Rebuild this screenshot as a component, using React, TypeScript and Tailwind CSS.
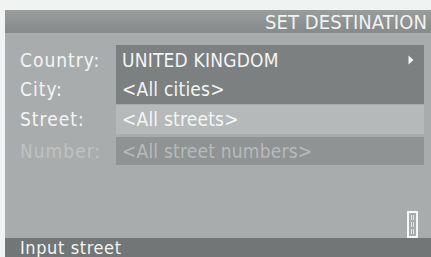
import React from 'react';

const font = { fontFamily: '"DejaVu Sans Condensed", "DejaVu Sans", sans-serif' };

function Row({
  label,
  value,
  dim,
  arrow,
  box,
  h,
}: {
  label: string;
  value: string;
  dim?: boolean;
  arrow?: boolean;
  box?: string;
  h: string;
}) {
  return (
    <div className={`flex items-center ${h}`}>
      <span className={`w-[111px] pl-[15px] text-[19px] tracking-[1px] ${dim ? 'text-[#bfc2c2]' : 'text-[#f4f5f5]'}`}>
        {label}
      </span>
      <div className={`flex h-full flex-1 items-center justify-between pl-[6px] pr-[10px] ${box ?? ''}`}>
        <span className={`text-[19px] tracking-[0.2px] ${dim ? 'text-[#b7baba]' : 'text-[#f4f5f5]'}`}>{value}</span>
        {arrow && (
          <svg width="6" height="10" viewBox="0 0 6 10">
            <path d="M0.5 0.5 L5.5 5 L0.5 9.5 Z" fill="#f4f5f5" />
          </svg>
        )}
      </div>
    </div>
  );
}

export default function App() {
  return (
    <div className="w-[431px] h-[257px] overflow-hidden bg-[#f1f2f2] pt-[10px] pl-[5px]" style={font}>
      <div className="flex h-full flex-col bg-[#a9acac]">
        {/* Title bar */}
        <div className="flex h-[23px] items-center justify-end bg-gradient-to-b from-[#9a9d9d] to-[#878a8a] pr-[4px]">
          <span className="text-[20px] leading-none tracking-[0.1px] text-[#f2f3f3]">SET DESTINATION</span>
        </div>

        <div className="flex flex-1 flex-col pt-[12px] pr-[7px]">
          <Row label="Country:" value="UNITED KINGDOM" arrow box="bg-[#7c8080]" h="h-[30px]" />
          <Row label="City:" value="<All cities>" box="bg-[#7c8080]" h="h-[29px]" />
          <div className="mt-[1px]">
            <Row label="Street:" value="<All streets>" box="bg-[#b6b9b9]" h="h-[29px]" />
          </div>
          <div className="mt-[3px]">
            <Row label="Number:" value="<All street numbers>" dim box="bg-[#8f9393]" h="h-[28px]" />
          </div>

          <div className="flex flex-1 items-end justify-end pr-[6px]">
            <div className="flex h-[27px] w-[11px] flex-col gap-[2px] border-2 border-[#f6f7f7] px-[2px] py-[2px]">
              <div className="flex-1 border-x border-[#e2e4e4]" />
              <div className="flex-1 border-x border-[#e2e4e4]" />
              <div className="flex-1 border-x border-[#e2e4e4]" />
            </div>
          </div>
        </div>

        {/* Status bar */}
        <div className="flex h-[19px] items-center bg-[#727676] pl-[15px]">
          <span className="text-[18px] leading-none tracking-[0.6px] text-[#f4f5f5]">Input street</span>
        </div>
      </div>
    </div>
  );
}
